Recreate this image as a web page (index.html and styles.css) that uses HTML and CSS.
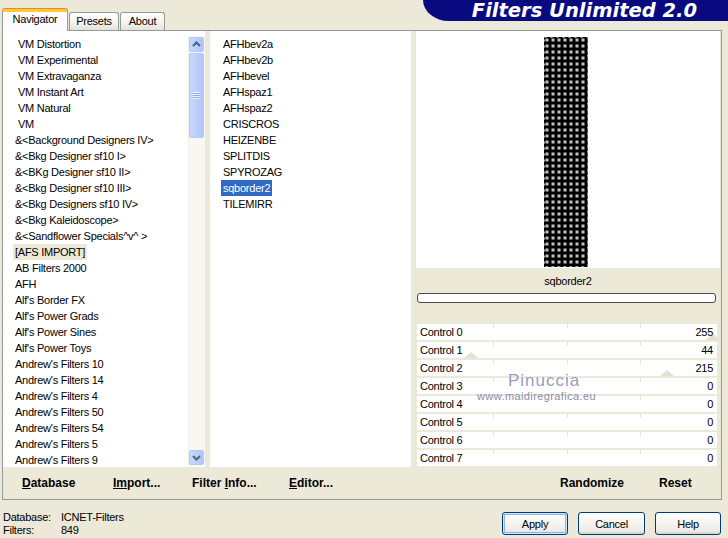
FILE: index.html
```html
<!DOCTYPE html>
<html>
<head>
<meta charset="utf-8">
<title>Filters Unlimited 2.0</title>
<link rel="stylesheet" href="styles.css">
</head>
<body>
<div class="top">
  <div class="tabs">
    <div class="tab active">Navigator</div>
    <div class="tab presets">Presets</div>
    <div class="tab about">About</div>
  </div>
  <div class="banner">Filters Unlimited 2.0</div>
</div>

<div class="page">
  <div class="cols">
    <div class="list cats">
      <ul class="items">
        <li class="ind">VM Distortion</li>
        <li class="ind">VM Experimental</li>
        <li class="ind">VM Extravaganza</li>
        <li class="ind">VM Instant Art</li>
        <li class="ind">VM Natural</li>
        <li class="ind">VM</li>
        <li>&amp;&lt;Background Designers IV&gt;</li>
        <li>&amp;&lt;Bkg Designer sf10 I&gt;</li>
        <li>&amp;&lt;BKg Designer sf10 II&gt;</li>
        <li>&amp;&lt;Bkg Designer sf10 III&gt;</li>
        <li>&amp;&lt;Bkg Designers sf10 IV&gt;</li>
        <li>&amp;&lt;Bkg Kaleidoscope&gt;</li>
        <li>&amp;&lt;Sandflower Specials^v^ &gt;</li>
        <li class="inactive-sel"><span>[AFS IMPORT]</span></li>
        <li>AB Filters 2000</li>
        <li>AFH</li>
        <li>Alf's Border FX</li>
        <li>Alf's Power Grads</li>
        <li>Alf's Power Sines</li>
        <li>Alf's Power Toys</li>
        <li>Andrew's Filters 10</li>
        <li>Andrew's Filters 14</li>
        <li>Andrew's Filters 4</li>
        <li>Andrew's Filters 50</li>
        <li>Andrew's Filters 54</li>
        <li>Andrew's Filters 5</li>
        <li>Andrew's Filters 9</li>
      </ul>
      <div class="vscroll">
        <div class="sbtn"><svg width="15" height="15" viewBox="0 0 15 15"><path d="M4 9 L7.5 5.5 L11 9" fill="none" stroke="#4D6185" stroke-width="2"/></svg></div>
        <div class="thumb"><span class="grip"></span></div>
        <div class="track"></div>
        <div class="sbtn"><svg width="15" height="15" viewBox="0 0 15 15"><path d="M4 6 L7.5 9.5 L11 6" fill="none" stroke="#4D6185" stroke-width="2"/></svg></div>
      </div>
    </div>

    <div class="list filters">
      <ul class="items">
        <li>AFHbev2a</li>
        <li>AFHbev2b</li>
        <li>AFHbevel</li>
        <li>AFHspaz1</li>
        <li>AFHspaz2</li>
        <li>CRISCROS</li>
        <li>HEIZENBE</li>
        <li>SPLITDIS</li>
        <li>SPYROZAG</li>
        <li class="sel"><span>sqborder2</span></li>
        <li>TILEMIRR</li>
      </ul>
    </div>

    <div class="right">
      <div class="preview">
        <svg width="44" height="230" viewBox="0 0 44 230">
          <defs>
            <pattern id="sq" width="6" height="6" patternUnits="userSpaceOnUse">
              <rect width="6" height="6" fill="#000"/>
              <rect x="1.5" y="1.5" width="3" height="3" fill="#C4C4C4"/>
            </pattern>
          </defs>
          <rect width="44" height="230" fill="url(#sq)"/>
          <rect x="0.5" y="0.5" width="43" height="229" fill="none" stroke="#A8A8A8" stroke-dasharray="2 4"/>
        </svg>
      </div>
      <div class="info">
        <div class="fname">sqborder2</div>
        <div class="progress"></div>
      </div>
      <div class="controls">
        <div class="row"><i class="mark" style="left:296px"></i><span>Control 0</span><span>255</span></div>
        <div class="row"><i class="mark" style="left:54px"></i><span>Control 1</span><span>44</span></div>
        <div class="row"><i class="mark" style="left:250px"></i><span>Control 2</span><span>215</span></div>
        <div class="row"><span>Control 3</span><span>0</span></div>
        <div class="row"><span>Control 4</span><span>0</span></div>
        <div class="row"><span>Control 5</span><span>0</span></div>
        <div class="row"><span>Control 6</span><span>0</span></div>
        <div class="row"><span>Control 7</span><span>0</span></div>
      </div>
      <div class="wm-name">Pinuccia</div>
      <div class="wm-url">www.maidiregrafica.eu</div>
    </div>
  </div>

  <div class="bar">
    <div class="bar-left">
      <span><u>D</u>atabase</span>
      <span><u>Im</u>port...</span>
      <span>Filter <u>I</u>nfo...</span>
      <span><u>E</u>ditor...</span>
    </div>
    <div class="bar-right">
      <span>Randomize</span>
      <span>Reset</span>
    </div>
  </div>
</div>

<div class="foot">
  <div class="status">
    <span>Database:</span><span>ICNET-Filters</span>
    <span>Filters:</span><span>849</span>
  </div>
  <div class="buttons">
    <button class="btn default">Apply</button>
    <button class="btn cancel">Cancel</button>
    <button class="btn">Help</button>
  </div>
</div>
</body>
</html>
```

FILE: styles.css
```css
body {
  margin: 0;
  width: 728px;
  height: 538px;
  overflow: hidden;
  background: #ECE9D8;
  font-family: "Liberation Sans", Arial, sans-serif;
  font-size: 11px;
  letter-spacing: -0.25px;
  color: #000;
}

/* ---------- top: tabs + banner ---------- */
.top {
  display: flex;
  justify-content: space-between;
  height: 30px;
}

.tabs {
  display: flex;
  align-items: flex-end;
  padding-left: 2px;
  position: relative;
  z-index: 2;
}

.tab {
  box-sizing: border-box;
  height: 18px;
  border: 1px solid #919B9C;
  border-bottom: none;
  border-radius: 3px 3px 0 0;
  background: linear-gradient(#FFFFFF, #F4F3EE 55%, #E3E1D8);
  text-align: center;
  line-height: 16px;
}

.tab.active {
  width: 66px;
  height: 22px;
  margin-bottom: -1px;
  border-top: 3px solid #FFC73C;
  box-shadow: 0 -1px 0 #E68B2C;
  background: #FCFCFE;
  line-height: 14px;
}

.tab.presets {
  width: 50px;
  margin-left: 1px;
}

.tab.about {
  width: 45px;
  margin-left: 1px;
}

.banner {
  box-sizing: border-box;
  width: 305px;
  height: 21px;
  padding-right: 31px;
  background: #0A0A80;
  border-bottom-left-radius: 26px 21px;
  color: #fff;
  font-family: "DejaVu Sans", sans-serif;
  font-style: italic;
  font-weight: bold;
  font-size: 19.5px;
  letter-spacing: 0;
  line-height: 21px;
  text-align: right;
  white-space: nowrap;
}

/* ---------- tab page ---------- */
.page {
  box-sizing: border-box;
  margin-left: 2px;
  width: 720px;
  height: 470px;
  border: 1px solid #919B9C;
  background: #ECE9D8;
}

.cols {
  display: flex;
  height: 436px;
}

.list {
  background: #fff;
}

.items {
  list-style: none;
  margin: 0;
  padding: 5px 0 0 0;
  flex: 1;
  white-space: nowrap;
  overflow: hidden;
}

.items li {
  height: 16px;
  line-height: 16px;
}

.cats {
  width: 202px;
  margin-right: 5px;
  display: flex;
}

.cats .items li {
  padding-left: 12px;
}

.cats .items li.ind {
  padding-left: 15px;
}

.inactive-sel span {
  display: inline-block;
  margin-left: -2px;
  padding: 0 2px;
  background: #ECE9D8;
}

.filters {
  width: 201px;
  margin-right: 5px;
}

.filters .items li {
  padding-left: 13px;
}

.sel span {
  display: inline-block;
  margin-left: -2px;
  padding: 0 2px;
  background: #316AC5;
  color: #fff;
}

/* scrollbar */
.vscroll {
  box-sizing: border-box;
  width: 17px;
  height: 430px;
  margin-top: 5px;
  padding: 1px;
  display: flex;
  flex-direction: column;
  background: #F8F7F2;
  border-left: 1px solid #EFEEE7;
}

.sbtn, .thumb {
  box-sizing: border-box;
  width: 15px;
  border: 1px solid #B5C9F5;
  border-radius: 2px;
  background: linear-gradient(to right, #CAD9FC, #BACDFA 60%, #AFC5F7);
}

.vscroll .sbtn {
  height: 15px;
  margin-left: -1px;
}

.sbtn svg {
  display: block;
  margin: -1px;
}

.thumb {
  height: 85px;
  margin-top: 1px;
  margin-left: -1px;
  display: flex;
  align-items: center;
  justify-content: center;
}

.grip {
  width: 7px;
  height: 7px;
  background: repeating-linear-gradient(#EEF4FE 0 1px, #8CAEF0 1px 2px);
}

.track {
  flex: 1;
}

/* ---------- right panel ---------- */
.right {
  position: relative;
  width: 304px;
  display: flex;
  flex-direction: column;
}

.preview {
  box-sizing: border-box;
  height: 237px;
  padding: 6px 4px 0 0;
  background: #fff;
  display: flex;
  justify-content: center;
}

.preview svg {
  display: block;
}

.info {
  height: 56px;
}

.fname {
  padding-top: 5px;
  line-height: 16px;
  text-align: center;
}

.progress {
  box-sizing: border-box;
  width: 299px;
  height: 10px;
  margin: 4px 0 0 1px;
  border: 1px solid #4A4A4A;
  border-radius: 3px;
  background: #fff;
}

.controls {
  padding: 0 3px 0 1px;
}

.row {
  position: relative;
  height: 16px;
  margin-bottom: 2px;
  padding: 0 4px 0 3px;
  display: flex;
  justify-content: space-between;
  line-height: 16px;
  background-color: #fff;
  background-image:
    linear-gradient(#E6E3D8, #E6E3D8),
    linear-gradient(#E6E3D8, #E6E3D8),
    linear-gradient(#E6E3D8, #E6E3D8);
  background-size: 1px 4px;
  background-repeat: no-repeat;
  background-position: 76px 0, 150px 0, 223px 0;
}

.row:last-child {
  margin-bottom: 0;
}

.row span {
  position: relative;
  z-index: 1;
}

.mark {
  position: absolute;
  bottom: 0;
  width: 0;
  height: 0;
  border-left: 7px solid transparent;
  border-right: 7px solid transparent;
  border-bottom: 6px solid #E4E1D3;
  transform: translateX(-50%);
}

.wm-name {
  position: absolute;
  left: 92px;
  top: 341px;
  font-size: 17px;
  line-height: 17px;
  letter-spacing: 1px;
  color: #9A9ABD;
  text-shadow: 0 0 1px #fff;
  z-index: 2;
}

.wm-url {
  position: absolute;
  left: 61px;
  top: 360px;
  font-size: 11px;
  line-height: 11px;
  letter-spacing: 0.4px;
  color: #8C8CA8;
  z-index: 2;
}

/* ---------- bottom bar ---------- */
.bar {
  box-sizing: border-box;
  display: flex;
  height: 32px;
  padding-top: 1px;
  font-size: 12px;
  font-weight: bold;
  letter-spacing: 0;
  line-height: 31px;
  white-space: nowrap;
}

.bar-left {
  box-sizing: border-box;
  width: 413px;
  padding-left: 19px;
  display: grid;
  grid-template-columns: 91px 79px 97px auto;
}

.bar-right {
  padding-left: 144px;
  display: grid;
  grid-template-columns: 99px auto;
}

/* ---------- footer ---------- */
.foot {
  height: 38px;
  display: flex;
  justify-content: space-between;
}

.status {
  margin: 11px 0 0 3px;
  display: grid;
  grid-template-columns: 58px auto;
  line-height: 13px;
  align-content: start;
}

.buttons {
  display: flex;
  gap: 10px;
  margin: 12px 7px 0 0;
  align-items: flex-start;
}

.btn {
  box-sizing: border-box;
  width: 66px;
  height: 23px;
  padding: 0;
  border: 1px solid #003C74;
  border-radius: 3px;
  background: linear-gradient(#FFFFFF, #F6F5F1 45%, #ECEBE6 85%, #D6D0C5);
  font-family: "Liberation Sans", Arial, sans-serif;
  font-size: 11px;
  letter-spacing: -0.25px;
  color: #000;
}

.btn.cancel {
  width: 67px;
}

.btn.default {
  box-shadow: inset 0 0 0 1px #CEE7FF, inset 0 0 0 2px #8FB4EC;
}
```
